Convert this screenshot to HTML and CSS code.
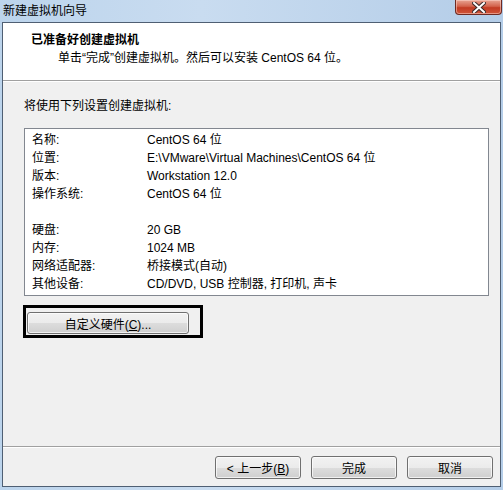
FILE: index.html
```html
<!DOCTYPE html>
<html lang="zh-CN">
<head>
  <meta charset="UTF-8">
  <title>新建虚拟机向导</title>
  <link rel="stylesheet" href="styles.css">
</head>
<body>
  <div class="window">
    <div class="title-bar">
      <span class="title">新建虚拟机向导</span>
      <button class="close-btn" aria-label="关闭">
        <svg width="14" height="11" viewBox="0 0 14 11">
          <path d="M2 1 L12 10 M12 1 L2 10" stroke="#3b2a2a" stroke-width="4" stroke-linecap="square"/>
          <path d="M2 1 L12 10 M12 1 L2 10" stroke="#ffffff" stroke-width="2" stroke-linecap="square"/>
        </svg>
      </button>
    </div>

    <div class="client">
      <div class="header">
        <div class="heading">已准备好创建虚拟机</div>
        <div class="subheading">单击“完成”创建虚拟机。然后可以安装 CentOS 64 位。</div>
      </div>

      <div class="content">
        <div class="intro">将使用下列设置创建虚拟机:</div>
        <div class="summary">
          <div class="row"><span class="label">名称:</span><span>CentOS 64 位</span></div>
          <div class="row"><span class="label">位置:</span><span>E:\VMware\Virtual Machines\CentOS 64 位</span></div>
          <div class="row"><span class="label">版本:</span><span>Workstation 12.0</span></div>
          <div class="row"><span class="label">操作系统:</span><span>CentOS 64 位</span></div>
          <div class="row"></div>
          <div class="row"><span class="label">硬盘:</span><span>20 GB</span></div>
          <div class="row"><span class="label">内存:</span><span>1024 MB</span></div>
          <div class="row"><span class="label">网络适配器:</span><span>桥接模式(自动)</span></div>
          <div class="row"><span class="label">其他设备:</span><span>CD/DVD, USB 控制器, 打印机, 声卡</span></div>
        </div>
        <div class="focus-mark">
          <button class="btn btn-wide">自定义硬件(<u>C</u>)...</button>
        </div>
      </div>

      <div class="footer">
        <button class="btn">&lt; 上一步(<u>B</u>)</button>
        <button class="btn">完成</button>
        <button class="btn">取消</button>
      </div>
    </div>
  </div>
</body>
</html>
```

FILE: styles.css
```css
* { box-sizing: border-box; margin: 0; padding: 0; }

body {
  width: 503px;
  height: 490px;
  overflow: hidden;
  font-family: "Liberation Sans", "Noto Sans CJK SC", sans-serif;
  font-size: 12px;
  color: #000;
}

.window {
  width: 503px;
  height: 490px;
  display: flex;
  flex-direction: column;
  padding: 0 2px 3px 2px;
  background: linear-gradient(to right, #bcd4ec, #c9dcf0 40%, #b4cde8);
}

.title-bar {
  height: 22px;
  display: flex;
  justify-content: space-between;
  align-items: flex-start;
  flex-shrink: 0;
}
.title {
  padding: 4px 0 0 1px;
  line-height: 14px;
  color: #000;
}
.close-btn {
  width: 47px;
  height: 15px;
  margin-right: -1px;
  border: 1px solid #6e2a22;
  border-top: none;
  border-radius: 0 0 4px 4px;
  background: linear-gradient(to bottom, #e8a493, #d3634c 45%, #c23b23 55%, #d0553a);
  display: flex;
  justify-content: center;
  align-items: center;
  box-shadow: inset 0 0 0 1px rgba(255, 220, 210, 0.5);
}

.client {
  flex: 1;
  display: flex;
  flex-direction: column;
  border: 1px solid #4f5f73;
  background: #f0f0f0;
}

.header {
  background: #fff;
  height: 58px;
  padding-top: 8px;
  border-bottom: 1px solid #a0a0a0;
  box-shadow: 0 1px 0 #fff;
  line-height: 18px;
  flex-shrink: 0;
}
.heading {
  padding-left: 28px;
  font-weight: bold;
}
.subheading {
  padding-left: 55px;
}

.content {
  flex: 1;
  padding: 16px 11px 0 21px;
}
.intro {
  line-height: 18px;
}
.summary {
  margin-top: 13px;
  height: 168px;
  background: #fff;
  border: 1px solid #828790;
  padding: 2px 0 1px 7px;
}
.row {
  height: 18px;
  line-height: 18px;
  display: flex;
  white-space: nowrap;
}
.label {
  width: 115px;
  flex-shrink: 0;
}

.focus-mark {
  width: 180px;
  height: 33px;
  margin: 9px 0 0 -1px;
  border: 3px solid #000;
  padding: 4px 0 0 1px;
}

.btn {
  width: 86px;
  height: 23px;
  font: inherit;
  color: #000;
  border: 1px solid #707070;
  border-radius: 3px;
  background: linear-gradient(to bottom, #f2f2f2, #ebebeb 50%, #dddddd 50%, #cfcfcf);
  box-shadow: inset 0 0 0 1px rgba(255, 255, 255, 0.7);
}
.btn u { text-decoration: underline; }
.btn-wide {
  width: 162px;
  height: 22px;
}

.footer {
  flex-shrink: 0;
  height: 40px;
  border-top: 1px solid #a0a0a0;
  box-shadow: inset 0 1px 0 #fff;
  display: flex;
  justify-content: flex-end;
  gap: 10px;
  padding: 9px 7px 0 0;
}
```
